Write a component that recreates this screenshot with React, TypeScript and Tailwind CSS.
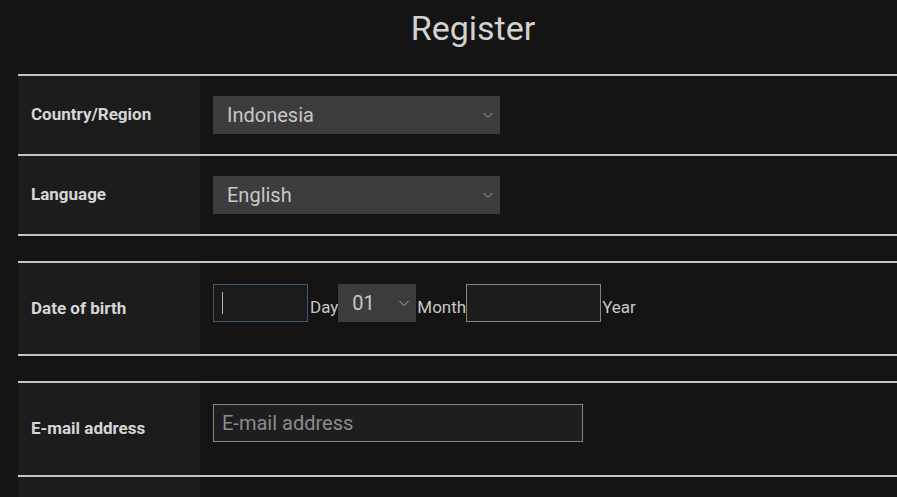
import React from 'react'

function Chevron() {
  return (
    <svg className="pointer-events-none absolute right-[6px] top-1/2 -translate-y-1/2 w-[12px] h-[12px] text-[#a8a8a8]" fill="none" viewBox="0 0 12 12" stroke="currentColor" strokeWidth={1}>
      <path d="M1.5 4l4.5 4.5L10.5 4" />
    </svg>
  )
}

function FakeSelect({ value, width }: { value: string; width: string }) {
  return (
    <div className={`relative h-[38px] ${width}`}>
      <select
        defaultValue={value}
        className="w-full h-full appearance-none bg-[#3c3c3c] text-[#c8c8c8] text-[20px] font-['Roboto'] pl-[14px] pr-8 outline-none rounded-none border-0"
      >
        <option value={value}>{value}</option>
      </select>
      <Chevron />
    </div>
  )
}

function Label({ children }: { children: React.ReactNode }) {
  return (
    <div className="w-[182px] shrink-0 bg-[#1c1c1c] flex items-center pl-[13px] text-[17px] font-bold text-[#d6d6d6]">
      {children}
    </div>
  )
}

export default function App() {
  return (
    <div className="w-[897px] h-[497px] overflow-hidden bg-[#141414] font-['Roboto',sans-serif]">
      <div className="ml-[18px] w-[910px]">
        {/* Título */}
        <div className="h-[74px] pt-[3px] text-center text-[34px] leading-normal text-[#d2d2d2]">
          Register
        </div>

        {/* País */}
        <div className="flex h-[80px] border-t-2 border-[#c4c4c4]">
          <Label>Country/Region</Label>
          <div className="flex-1 pl-[13px] pt-[20px]">
            <FakeSelect value="Indonesia" width="w-[287px]" />
          </div>
        </div>

        {/* Idioma */}
        <div className="flex h-[80px] border-t-2 border-[#c4c4c4]">
          <Label>Language</Label>
          <div className="flex-1 pl-[13px] pt-[20px]">
            <FakeSelect value="English" width="w-[287px]" />
          </div>
        </div>

        <div className="h-[27px] border-t-2 border-[#c4c4c4]" />

        {/* Fecha de nacimiento */}
        <div className="flex h-[93px] border-t-2 border-[#c4c4c4]">
          <Label>Date of birth</Label>
          <div className="flex-1 pl-[13px] pt-[21px]">
            <div className="flex items-center text-[17px] text-[#c8c8c8]">
              <div className="w-[95px] h-[38px] border border-[#3d5a74] bg-[#1a1a1a] flex items-center pl-[8px]">
                <span className="w-px h-[22px] bg-[#b4b4b4]" />
              </div>
              <span className="ml-[2px] mt-[10px]">Day</span>
              <FakeSelect value="01" width="w-[78px]" />
              <span className="ml-px mt-[10px]">Month</span>
              <div className="w-[135px] h-[38px] border border-[#858585] bg-[#1c1c1c]" />
              <span className="ml-px mt-[10px]">Year</span>
            </div>
          </div>
        </div>

        <div className="h-[27px] border-t-2 border-[#c4c4c4]" />

        {/* Correo */}
        <div className="flex h-[94px] border-t-2 border-[#c4c4c4]">
          <Label>E-mail address</Label>
          <div className="flex-1 pl-[13px] pt-[21px]">
            <input
              type="text"
              placeholder="E-mail address"
              className="w-[370px] h-[38px] border border-[#858585] bg-[#1e1e1e] px-[8px] text-[20px] text-[#c8c8c8] placeholder:text-[#8c8c8c] outline-none font-['Roboto']"
            />
          </div>
        </div>

        <div className="flex h-[60px] border-t-2 border-[#c4c4c4]">
          <Label>{''}</Label>
        </div>
      </div>
    </div>
  )
}
